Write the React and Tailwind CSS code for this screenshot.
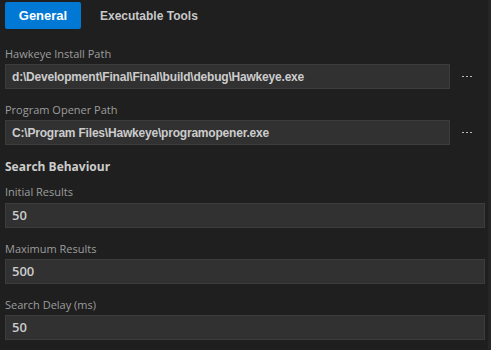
export default function App() {
  const label = "block h-[16px] leading-[16px] text-[11px] text-[#9d9d9d] font-['Open_Sans',sans-serif]";
  const input = "h-[25px] border border-[#3c3c3c] bg-[#313131] flex items-center pl-[6px] text-[#cccccc]";
  const pathFont = "font-['Liberation_Sans',Arial,sans-serif] font-bold text-[12px] tracking-[-0.2px]";
  const numFont = "font-['Open_Sans',sans-serif] font-semibold text-[13px]";
  return (
    <div className="w-[491px] h-[350px] bg-[#1f1f1f] flex overflow-hidden">
      <div className="flex-1 pl-[5px] pr-[3px] flex flex-col">
        <div className="flex items-center mt-[2px] h-[27px]">
          <div className="h-[27px] w-[76px] rounded-[2px] bg-[#0078d4] flex items-center justify-center text-white text-[13px] font-bold font-['Liberation_Sans',Arial,sans-serif]">
            General
          </div>
          <div className="ml-[19px] text-[12px] text-[#c8c8c8] font-bold font-['Liberation_Sans',Arial,sans-serif]">
            Executable Tools
          </div>
        </div>

        <div className="mt-[17px]">
          <span className={label}>Hawkeye Install Path</span>
          <div className="flex mt-[2px]">
            <div className={`${input} ${pathFont} w-[445px]`}>d:\Development\Final\Final\build\debug\Hawkeye.exe</div>
            <div className="flex-1 flex items-center justify-center">
              <Dots />
            </div>
          </div>
        </div>

        <div className="mt-[13px]">
          <span className={label}>Program Opener Path</span>
          <div className="flex mt-[2px]">
            <div className={`${input} ${pathFont} w-[445px]`}>C:\Program Files\Hawkeye\programopener.exe</div>
            <div className="flex-1 flex items-center justify-center">
              <Dots />
            </div>
          </div>
        </div>

        <div className="mt-[13px] h-[18px] leading-[18px] text-[12px] font-bold text-[#cccccc] font-['Open_Sans',sans-serif]">
          Search Behaviour
        </div>

        <div className="mt-[8px]">
          <span className={label}>Initial Results</span>
          <div className={`${input} ${numFont} mt-[3px] w-[480px]`}>50</div>
        </div>
        <div className="mt-[13px]">
          <span className={label}>Maximum Results</span>
          <div className={`${input} ${numFont} mt-[2px] w-[480px]`}>500</div>
        </div>
        <div className="mt-[13px]">
          <span className={label}>Search Delay (ms)</span>
          <div className={`${input} ${numFont} mt-[2px] w-[480px]`}>50</div>
        </div>
      </div>
      <div className="w-[3px] bg-[#262626]" />
    </div>
  );
}

function Dots() {
  return (
    <div className="flex gap-[2px] ml-[-2px]">
      <div className="w-[2px] h-[1px] bg-[#bbbbbb]" />
      <div className="w-[2px] h-[1px] bg-[#bbbbbb]" />
      <div className="w-[2px] h-[1px] bg-[#bbbbbb]" />
    </div>
  );
}
